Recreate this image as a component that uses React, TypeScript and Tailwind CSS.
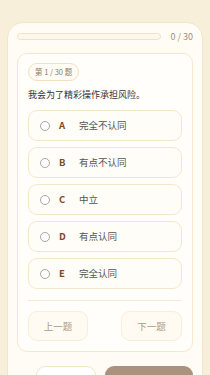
import React from 'react';

const options = [
  { key: 'A', label: '完全不认同' },
  { key: 'B', label: '有点不认同' },
  { key: 'C', label: '中立' },
  { key: 'D', label: '有点认同' },
  { key: 'E', label: '完全认同' },
];

export default function App() {
  return (
    <div
      className="h-[375px] overflow-hidden bg-[#f8efdb] px-[7px] pt-[22px]"
      style={{ fontFamily: '"Noto Sans CJK SC", "Noto Sans", sans-serif' }}
    >
      <div className="rounded-t-[16px] border border-[#f3e5c8] bg-[#fffcf5] px-[9px] pt-[10px] pb-[20px]">
        {/* progress */}
        <div className="flex h-[7px] items-center gap-[9px]">
          <div className="h-[7px] flex-1 rounded-full border border-[#f3e2c2] bg-[#fdf7ec]" />
          <span className="whitespace-nowrap text-right text-[9px] leading-none text-[#9b9083]">0 / 30</span>
        </div>

        {/* question card */}
        <div className="mt-[13px] rounded-[10px] border border-[#f6e8cd] bg-[#fffefb] px-[10px] pt-[9px] pb-[10px]">
          <div className="flex">
            <span className="flex h-[18px] items-center rounded-full border border-[#f2e0c0] bg-[#fffcf5] px-[6px] text-[7.5px] text-[#8a7b6c]">
              第 1 / 30 题
            </span>
          </div>
          <p className="mt-[7px] text-[9px] leading-[14px] text-[#333333]">我会为了精彩操作承担风险。</p>

          <div className="mt-[8px] flex flex-col gap-[6px]">
            {options.map((o) => (
              <button
                key={o.key}
                className="flex h-[31px] items-center rounded-[9px] border border-[#f6e7cb] bg-[#fffdf8] pl-[11px] text-left"
              >
                <span className="h-[10px] w-[10px] rounded-full border border-[#a9a6a2] bg-white" />
                <span className="ml-[9px] w-[20px] text-[9.5px] font-bold text-[#7b4b2b]">{o.key}</span>
                <span className="text-[9.5px] text-[#555555]">{o.label}</span>
              </button>
            ))}
          </div>

          <div className="mt-[11px] h-px bg-[#f6ead4]" />

          <div className="mt-[10px] flex justify-between">
            <button className="flex h-[30px] w-[60px] items-center justify-center rounded-[9px] border border-[#f8eedb] bg-[#fffbf2] text-[9.5px] text-[#ab9a86]">
              上一题
            </button>
            <button className="flex h-[30px] w-[61px] items-center justify-center rounded-[9px] border border-[#f8eedb] bg-[#fffbf2] text-[9.5px] text-[#ab9a86]">
              下一题
            </button>
          </div>
        </div>

        {/* bottom actions */}
        <div className="mt-[14px] flex justify-end gap-[9px]">
          <button className="h-[30px] w-[60px] rounded-[9px] border border-[#f3e5c8] bg-white" />
          <button className="h-[30px] w-[88px] rounded-[9px] bg-[#ab927e]" />
        </div>
      </div>
    </div>
  );
}
